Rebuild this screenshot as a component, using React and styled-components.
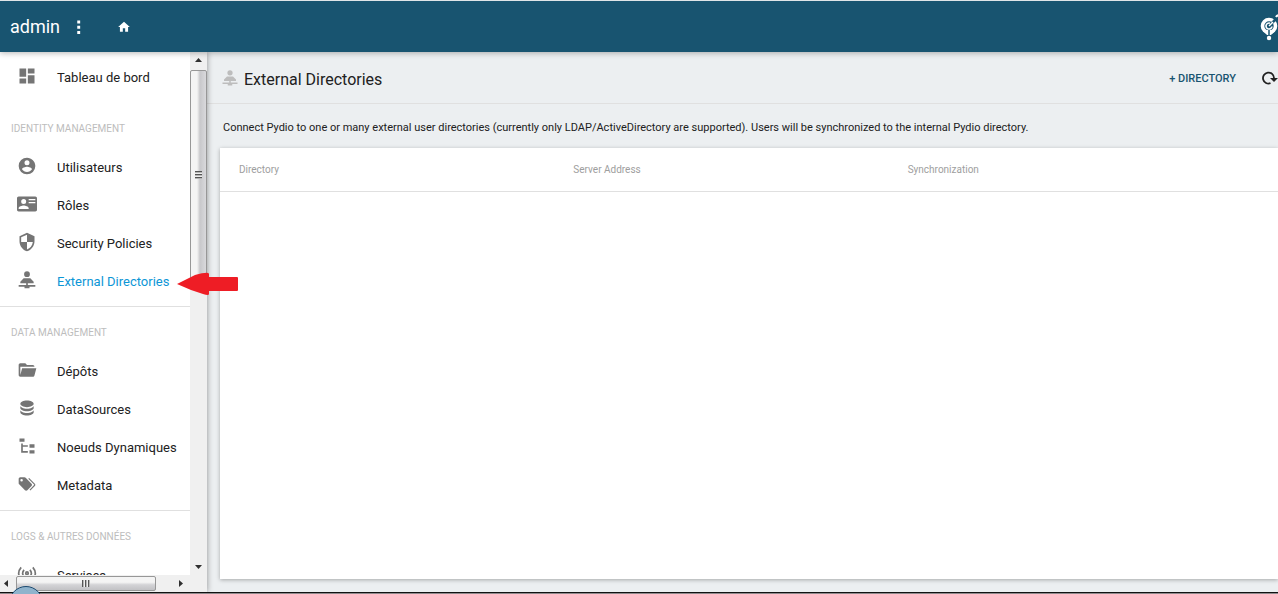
import React from "react";

import styled, { createGlobalStyle } from "styled-components";

const icons = {
  dashboard: "M13,3V9H21V3M13,21H21V11H13M3,21H11V15H3M3,13H11V3H3V13Z",
  user: "M12,19.2C9.5,19.2 7.29,17.92 6,16C6.03,14 10,12.9 12,12.9C14,12.9 17.97,14 18,16C16.71,17.92 14.5,19.2 12,19.2M12,5A3,3 0 0,1 15,8A3,3 0 0,1 12,11A3,3 0 0,1 9,8A3,3 0 0,1 12,5M12,2A10,10 0 0,0 2,12A10,10 0 0,0 12,22A10,10 0 0,0 22,12C22,6.47 17.5,2 12,2Z",
  card: "M2,3H22C23.05,3 24,3.95 24,5V19C24,20.05 23.05,21 22,21H2C0.95,21 0,20.05 0,19V5C0,3.95 0.95,3 2,3M14,6V7.5H22V6H14M14,9.5V11H22V9.5H14M8,13.91C6,13.91 2,15 2,17V18H14V17C14,15 10,13.91 8,13.91M8,6A3,3 0 0,0 5,9A3,3 0 0,0 8,12A3,3 0 0,0 11,9A3,3 0 0,0 8,6Z",
  security:
    "M12,12H19C18.47,16.11 15.72,19.78 12,20.92V12H5V6.3L12,3.19M12,1L3,5V11C3,16.55 6.84,21.73 12,23C17.16,21.73 21,16.55 21,11V5L12,1Z",
  directories:
    "M12,1.500A3.500,3.500 0 0,1 12,8.500A3.500,3.500 0 0,1 12,1.500M8,10H16L20,14V16H4V14ZM11,16H13V18H22V20H15V22H9V20H2V18H11Z",
  folder:
    "M19,20H4C2.89,20 2,19.1 2,18V6C2,4.89 2.89,4 4,4H10L12,6H19A2,2 0 0,1 21,8H21L4,8V18L6.14,10H23.21L20.93,18.5C20.7,19.37 19.92,20 19,20Z",
  database:
    "M12,3C7.58,3 4,4.79 4,7C4,9.21 7.58,11 12,11C16.42,11 20,9.21 20,7C20,4.79 16.42,3 12,3M4,9V12C4,14.21 7.58,16 12,16C16.42,16 20,14.21 20,12V9C20,11.21 16.42,13 12,13C7.58,13 4,11.21 4,9M4,14V17C4,19.21 7.58,21 12,21C16.42,21 20,19.21 20,17V14C20,16.21 16.42,18 12,18C7.58,18 4,16.21 4,14Z",
  tree: "M3,3H9V7H3V3M15,10H21V14H15V10M15,17H21V21H15V17M13,13H7V18H13V20H7L5,20V9H7V11H13V13Z",
  tags: "M5.5,9A1.5,1.5 0 0,0 7,7.5A1.5,1.5 0 0,0 5.5,6A1.5,1.5 0 0,0 4,7.5A1.5,1.5 0 0,0 5.5,9M17.41,11.58C17.77,11.94 18,12.44 18,13C18,13.55 17.78,14.05 17.41,14.41L12.41,19.41C12.05,19.77 11.55,20 11,20C10.45,20 9.95,19.78 9.58,19.41L2.59,12.42C2.22,12.05 2,11.55 2,11V6C2,4.89 2.89,4 4,4H9C9.55,4 10.05,4.22 10.41,4.58L17.41,11.58M13.54,5.71L14.54,4.71L21.41,11.58C21.78,11.94 22,12.45 22,13C22,13.55 21.78,14.05 21.42,14.41L16.04,19.79L15.04,18.79L20.75,13L13.54,5.71Z",
  home: "M10,20V14H14V20H19V12H22L12,3L2,12H5V20H10Z",
  dots: "M9,1H14V6H9ZM9,10H14V15H9ZM9,19H14V24H9Z",
};

const sections = [
  {
    title: "IDENTITY MANAGEMENT",
    items: [
      { icon: "user", label: "Utilisateurs" },
      { icon: "card", label: "Rôles" },
      { icon: "security", label: "Security Policies" },
      { icon: "directories", label: "External Directories", active: true },
    ],
  },
  {
    title: "DATA MANAGEMENT",
    items: [
      { icon: "folder", label: "Dépôts" },
      { icon: "database", label: "DataSources" },
      { icon: "tree", label: "Noeuds Dynamiques" },
      { icon: "tags", label: "Metadata" },
    ],
  },
  {
    title: "LOGS & AUTRES DONNÉES",
    items: [{ icon: "services", label: "Services" }],
  },
];

const Icon = ({ name, size = 18 }) => {
  return (
    <svg width={size} height={size} viewBox="0 0 24 24" aria-hidden="true">
      {name === "services" ? (
        <g fill="none" stroke="currentColor" strokeWidth="2">
          <path d="M5,4Q-1,11 5,18M19,4Q25,11 19,18M8.500,7Q5,11 8.500,15M15.500,7Q19,11 15.500,15" />
          <circle cx="12" cy="11" r="1.500" />
        </g>
      ) : (
        <path d={icons[name]} fill="currentColor" fillRule="evenodd" />
      )}
    </svg>
  );
};

const NavItem = ({ item }) => {
  return (
    <li>
      <NavLink href="#" $active={item.active}>
        <Icon name={item.icon} size={20} />
        <span>{item.label}</span>
      </NavLink>
    </li>
  );
};

const Arrow = ({ d }) => (
  <svg width="7" height="7" viewBox="0 0 7 7" aria-hidden="true">
    <path d={d} fill="#303030" />
  </svg>
);

const App = () => {
  return (
    <Page>
      <GlobalStyle />
      <TopBar>
        <Brand>admin</Brand>
        <TopButton aria-label="Menu">
          <Icon name="dots" size={14} />
        </TopButton>
        <HomeButton aria-label="Home">
          <Icon name="home" size={14} />
        </HomeButton>
        <Logo />
      </TopBar>
      <Body>
        <Sidebar>
          <Nav>
            <Group>
              <NavItem item={{ icon: "dashboard", label: "Tableau de bord" }} />
            </Group>
            {sections.map((section) => (
              <Section key={section.title}>
                <SectionTitle>{section.title}</SectionTitle>
                <List>
                  {section.items.map((item) => (
                    <NavItem key={item.label} item={item} />
                  ))}
                </List>
              </Section>
            ))}
          </Nav>
          <VerticalBar>
            <Arrow d="M0 5H7L3.500 1Z" />
            <VerticalTrack>
              <VerticalThumb>
                <Grip />
              </VerticalThumb>
            </VerticalTrack>
            <Arrow d="M0 2H7L3.500 6Z" />
          </VerticalBar>
          <HorizontalBar>
            <Arrow d="M5 0V7L1 3.500Z" />
            <HorizontalTrack>
              <HorizontalThumb>
                <Grip $vertical />
              </HorizontalThumb>
            </HorizontalTrack>
            <Arrow d="M2 0V7L6 3.500Z" />
          </HorizontalBar>
          <Pointer viewBox="0 0 62 24" aria-hidden="true">
            <path
              d="M0 12L18 3Q32 -1 32 2V5H60Q61 5 61 6V18Q61 19 60 19H32V22Q32 24 26 22L14 18Z"
              fill="#ee1d25"
            />
          </Pointer>
        </Sidebar>
        <Main>
          <Toolbar>
            <Icon name="directories" />
            <Title>External Directories</Title>
            <AddButton>+ DIRECTORY</AddButton>
            <RefreshButton aria-label="Refresh">
              <RefreshIcon />
            </RefreshButton>
          </Toolbar>
          <Description>
            Connect Pydio to one or many external user directories (currently
            only LDAP/ActiveDirectory are supported). Users will be synchronized
            to the internal Pydio directory.
          </Description>
          <Card>
            <Table>
              <thead>
                <tr>
                  <Th>Directory</Th>
                  <Th>Server Address</Th>
                  <Th>Synchronization</Th>
                  <ActionCell />
                </tr>
              </thead>
            </Table>
          </Card>
        </Main>
      </Body>
      <Footer>
        <Orb />
      </Footer>
    </Page>
  );
};

const Logo = () => (
  <LogoSvg viewBox="0 0 22 34" aria-hidden="true">
    <circle cx="11" cy="16" r="6.500" fill="none" stroke="#fff" strokeWidth="3.600" />
    <path d="M5 21L9 20H13L17 21L13 25H9Z" fill="#fff" />
    <path d="M11 20V26" stroke="#185470" strokeWidth="1.500" />
    <path d="M14 13L20 7" stroke="#185470" strokeWidth="2.500" />
    <g fill="none" stroke="#fff">
      <path d="M12 13.200A3 3 0 1 0 14 16.500" strokeWidth="1.600" />
      <path d="M11 16L15 12" strokeWidth="1.400" />
      <path d="M18 7Q19 5 22 5" strokeWidth="2" />
    </g>
    <circle cx="11" cy="28" r="2.200" fill="#fff" />
  </LogoSvg>
);

const RefreshIcon = () => (
  <svg width="18" height="18" viewBox="0 0 18 18" aria-hidden="true">
    <path
      d="M10.500 14.200A5.500 5.500 0 1 1 14 9"
      fill="none"
      stroke="#212121"
      strokeWidth="1.800"
    />
    <path d="M10 9H18L14 13Z" fill="#212121" />
  </svg>
);

const GlobalStyle = createGlobalStyle`
  * {
    box-sizing: border-box;
  }
  body {
    margin: 0;
    font-family: Roboto, sans-serif;
    color: #212121;
  }
  button {
    padding: 0;
    border: none;
    background: none;
    color: inherit;
    font: inherit;
    cursor: pointer;
  }
  svg {
    display: block;
    flex: none;
  }
`;
const Page = styled.div`
  height: 100vh;
  display: flex;
  flex-direction: column;
  overflow: hidden;
`;
const TopBar = styled.header`
  height: 52px;
  flex: none;
  display: flex;
  align-items: center;
  padding-left: 10px;
  border-top: 1px solid #dfe5e8;
  background-color: #185470;
  color: #fff;
  box-shadow: 0 1px 6px rgba(0, 0, 0, 0.3);
  z-index: 1;
`;
const Brand = styled.span`
  font-size: 18px;
`;
const TopButton = styled.button`
  margin-left: 12px;
`;
const HomeButton = styled(TopButton)`
  margin-left: 31px;
`;
const LogoSvg = styled.svg`
  width: 22px;
  height: 34px;
  margin-left: auto;
  margin-right: -2px;
`;
const Body = styled.div`
  flex: 1;
  min-height: 0;
  display: flex;
`;
const Sidebar = styled.aside`
  position: relative;
  width: 207px;
  flex: none;
  display: grid;
  grid-template-columns: minmax(0, 1fr) 17px;
  grid-template-rows: minmax(0, 1fr) 17px;
  background-color: #f0f0f0;
  box-shadow: 0 0 6px rgba(0, 0, 0, 0.4);
`;
const Nav = styled.nav`
  overflow: hidden;
  background-color: #fff;
`;
const List = styled.ul`
  margin: 0;
  padding: 0;
  list-style: none;
`;
const Group = styled(List)`
  padding: 6px 0 7px;
`;
const Section = styled.section`
  padding-bottom: 6px;
  border-bottom: 1px solid #e0e0e0;
`;
const SectionTitle = styled.h2`
  margin: 0;
  padding: 18px 11px 11px;
  font-size: 10px;
  line-height: 16px;
  font-weight: 400;
  color: #bdbdbd;
  white-space: nowrap;
`;
const NavLink = styled.a`
  height: 38px;
  display: flex;
  align-items: center;
  gap: 20px;
  padding-left: 17px;
  font-size: 13px;
  white-space: nowrap;
  text-decoration: none;
  color: ${({ $active }) => ($active ? "#0d96d6" : "#212121")};
  svg {
    margin-bottom: 2px;
    color: #757575;
  }
`;
const VerticalBar = styled.div`
  display: flex;
  flex-direction: column;
  align-items: center;
  gap: 6px;
  padding: 5px 0;
`;
const VerticalTrack = styled.div`
  flex: 1;
  width: 100%;
`;
const VerticalThumb = styled.div`
  height: 43%;
  display: grid;
  place-items: center;
  border: 1px solid #979797;
  border-radius: 2px;
  background: linear-gradient(to right, #f4f4f4 40%, #c8c8cb 60%, #d9d9dc);
`;
const Grip = styled.span`
  width: ${({ $vertical }) => ($vertical ? "8px" : "7px")};
  height: ${({ $vertical }) => ($vertical ? "7px" : "8px")};
  background: repeating-linear-gradient(
    ${({ $vertical }) => ($vertical ? "to right" : "to bottom")},
    #555 0 1px,
    #b5b5b5 1px 2px,
    #eee 2px 3px
  );
`;
const HorizontalBar = styled.div`
  display: flex;
  align-items: center;
  gap: 6px;
  padding: 0 6px 0 3px;
`;
const HorizontalTrack = styled.div`
  flex: 1;
  height: 15px;
`;
const HorizontalThumb = styled.div`
  width: 90%;
  height: 15px;
  display: grid;
  place-items: center;
  border: 1px solid #979797;
  border-radius: 2px;
  background: linear-gradient(#f4f4f4 40%, #d3d3d6 60%, #c2c2c5);
`;
const Pointer = styled.svg`
  position: absolute;
  z-index: 2;
  left: 177px;
  top: 220px;
  width: 62px;
  height: 24px;
`;
const Main = styled.main`
  flex: 1;
  min-width: 0;
  display: flex;
  flex-direction: column;
  padding-bottom: 13px;
  background-color: #eceff1;
`;
const Toolbar = styled.div`
  height: 52px;
  flex: none;
  display: flex;
  align-items: center;
  padding-left: 14px;
  border-bottom: 1px solid #e0e0e0;
  > svg {
    color: #bdbdbd;
  }
`;
const Title = styled.h1`
  margin: 0 auto 0 5px;
  font-size: 16px;
  font-weight: 400;
  padding-top: 3px;
`;
const AddButton = styled.button`
  padding-top: 2px;
  font-size: 11px;
  font-weight: 500;
  color: #185470;
`;
const RefreshButton = styled.button`
  margin-left: 24px;
`;
const Description = styled.p`
  margin: 0;
  padding: 16px 16px 12px;
  font-size: 11px;
  line-height: 16px;
`;
const Card = styled.section`
  flex: 1;
  margin-left: 13px;
  background-color: #fff;
  box-shadow: 0 1px 4px rgba(0, 0, 0, 0.3);
`;
const Table = styled.table`
  width: 100%;
  table-layout: fixed;
  border-collapse: collapse;
`;
const Th = styled.th`
  height: 43px;
  padding: 0 19px;
  border-bottom: 1px solid #e0e0e0;
  font-size: 10px;
  font-weight: 400;
  text-align: left;
  color: #9e9e9e;
`;
const ActionCell = styled.td`
  width: 55px;
  border-bottom: 1px solid #e0e0e0;
`;
const Footer = styled.footer`
  position: relative;
  height: 2px;
  flex: none;
  background-color: #8f8a8c;
  border-top: 1px solid #111;
`;
const Orb = styled.span`
  position: absolute;
  left: 9px;
  bottom: -26px;
  width: 34px;
  height: 34px;
  border: 1px solid #1c4a70;
  border-radius: 50%;
  background-color: #8fb3cc;
`;

export default App;
